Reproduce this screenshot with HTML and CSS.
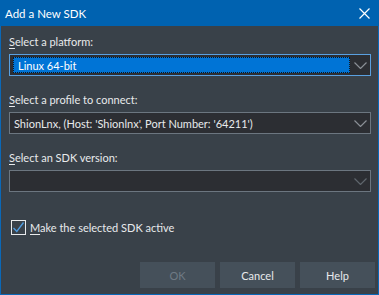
FILE: index.html
```html
<!DOCTYPE html>
<html>
<head>
<meta charset="utf-8">
<link rel="stylesheet" href="styles.css">
</head>
<body>
<div class="window">
  <div class="titlebar">
    <span class="title">Add a New SDK</span>
    <svg class="close" width="11" height="11" viewBox="0 0 11 11"><path d="M0.5 0.5 L10.5 10.5 M10.5 0.5 L0.5 10.5" stroke="#ffffff" stroke-width="1.2" fill="none"/></svg>
  </div>
  <div class="content">
    <div class="field">
      <label class="label"><u>S</u>elect a platform:</label>
      <div class="combo focused">
        <div class="value selected"><span>Linux 64-bit</span></div>
        <div class="arrow"><svg width="13" height="7" viewBox="0 0 13 7"><path d="M0.5 0.5 L6.5 6.5 L12.5 0.5" stroke="#8a8f96" stroke-width="1.2" fill="none"/></svg></div>
      </div>
    </div>
    <div class="field">
      <label class="label"><u>S</u>elect a profile to connect:</label>
      <div class="combo">
        <div class="value">ShionLnx, (Host: 'Shionlnx', Port Number: '64211')</div>
        <div class="arrow"><svg width="13" height="7" viewBox="0 0 13 7"><path d="M0.5 0.5 L6.5 6.5 L12.5 0.5" stroke="#8a8f96" stroke-width="1.2" fill="none"/></svg></div>
      </div>
    </div>
    <div class="field">
      <label class="label"><u>S</u>elect an SDK version:</label>
      <div class="combo disabled">
        <div class="value"></div>
        <div class="arrow"><svg width="13" height="7" viewBox="0 0 13 7"><path d="M0.5 0.5 L6.5 6.5 L12.5 0.5" stroke="#5f666d" stroke-width="1.2" fill="none"/></svg></div>
      </div>
    </div>
    <div class="check">
      <span class="box"><svg width="13" height="13" viewBox="0 0 13 13"><path d="M1.5 7 L4.8 10.5 L11.5 1.5" stroke="#4f9ce0" stroke-width="1.3" fill="none"/></svg></span>
      <span class="check-label"><u>M</u>ake the selected SDK active</span>
    </div>
    <div class="buttons">
      <button class="btn disabled">OK</button>
      <button class="btn">Cancel</button>
      <button class="btn">Help</button>
    </div>
  </div>
</div>
</body>
</html>
```
FILE: styles.css
```css
html, body {
  margin: 0;
  padding: 0;
  background: #394149;
}
.window {
  width: 379px;
  height: 295px;
  box-sizing: border-box;
  border: 1px solid #0a68b8;
  border-top: none;
  background: #394149;
  display: flex;
  flex-direction: column;
  font-family: "Lato", "Noto Sans", sans-serif;
  font-size: 11px;
  color: #e8eaec;
}
.titlebar {
  height: 26px;
  background: #0062b0;
  display: flex;
  align-items: center;
  justify-content: space-between;
  padding: 0 9px 0 5px;
  margin: 0 -1px;
  flex-shrink: 0;
}
.title {
  color: #ffffff;
  font-size: 11.5px;
}
.close {
  display: block;
}
.content {
  flex: 1;
  display: flex;
  flex-direction: column;
  padding: 0 7px 0 8px;
}
.field {
  display: flex;
  flex-direction: column;
}
.label {
  height: 16px;
  line-height: 16px;
  margin-top: 8px;
  margin-bottom: 4px;
}
.field + .field .label {
  margin-top: 16px;
}
u {
  text-decoration: underline;
  text-underline-offset: 2px;
}
.combo {
  height: 22px;
  box-sizing: border-box;
  border: 1px solid #6c7680;
  background: #2c2e33;
  display: flex;
  align-items: stretch;
}
.combo.focused {
  border-color: #5aa0e0;
}
.value {
  flex: 1;
  display: flex;
  align-items: center;
  padding-left: 4px;
  white-space: nowrap;
}
.value.selected {
  padding: 2px 0 2px 3px;
}
.value.selected span {
  flex: 1;
  background: #0074d6;
  height: 16px;
  line-height: 15px;
  padding-left: 4px;
  box-sizing: border-box;
  border: 1px dotted #101820;
  color: #ffffff;
}
.arrow {
  width: 20px;
  display: flex;
  align-items: center;
  justify-content: center;
  padding-top: 1px;
}
.check {
  margin-top: 27px;
  display: flex;
  align-items: center;
  height: 16px;
}
.box {
  width: 15px;
  height: 15px;
  box-sizing: border-box;
  border: 1px solid #e8eaec;
  display: flex;
  align-items: center;
  justify-content: center;
  margin-left: 2px;
  margin-right: 4px;
}
.box svg { display: block; }
.buttons {
  margin-top: auto;
  margin-bottom: 6px;
  display: flex;
  justify-content: flex-end;
  gap: 5px;
  margin-right: -4px;
}
.btn {
  width: 75px;
  height: 26px;
  border: none;
  background: #45505a;
  color: #e8eaec;
  font-family: "Lato", "Noto Sans", sans-serif;
  font-size: 11px;
  padding: 0;
}
.btn.disabled {
  color: #6f7a84;
}
```
